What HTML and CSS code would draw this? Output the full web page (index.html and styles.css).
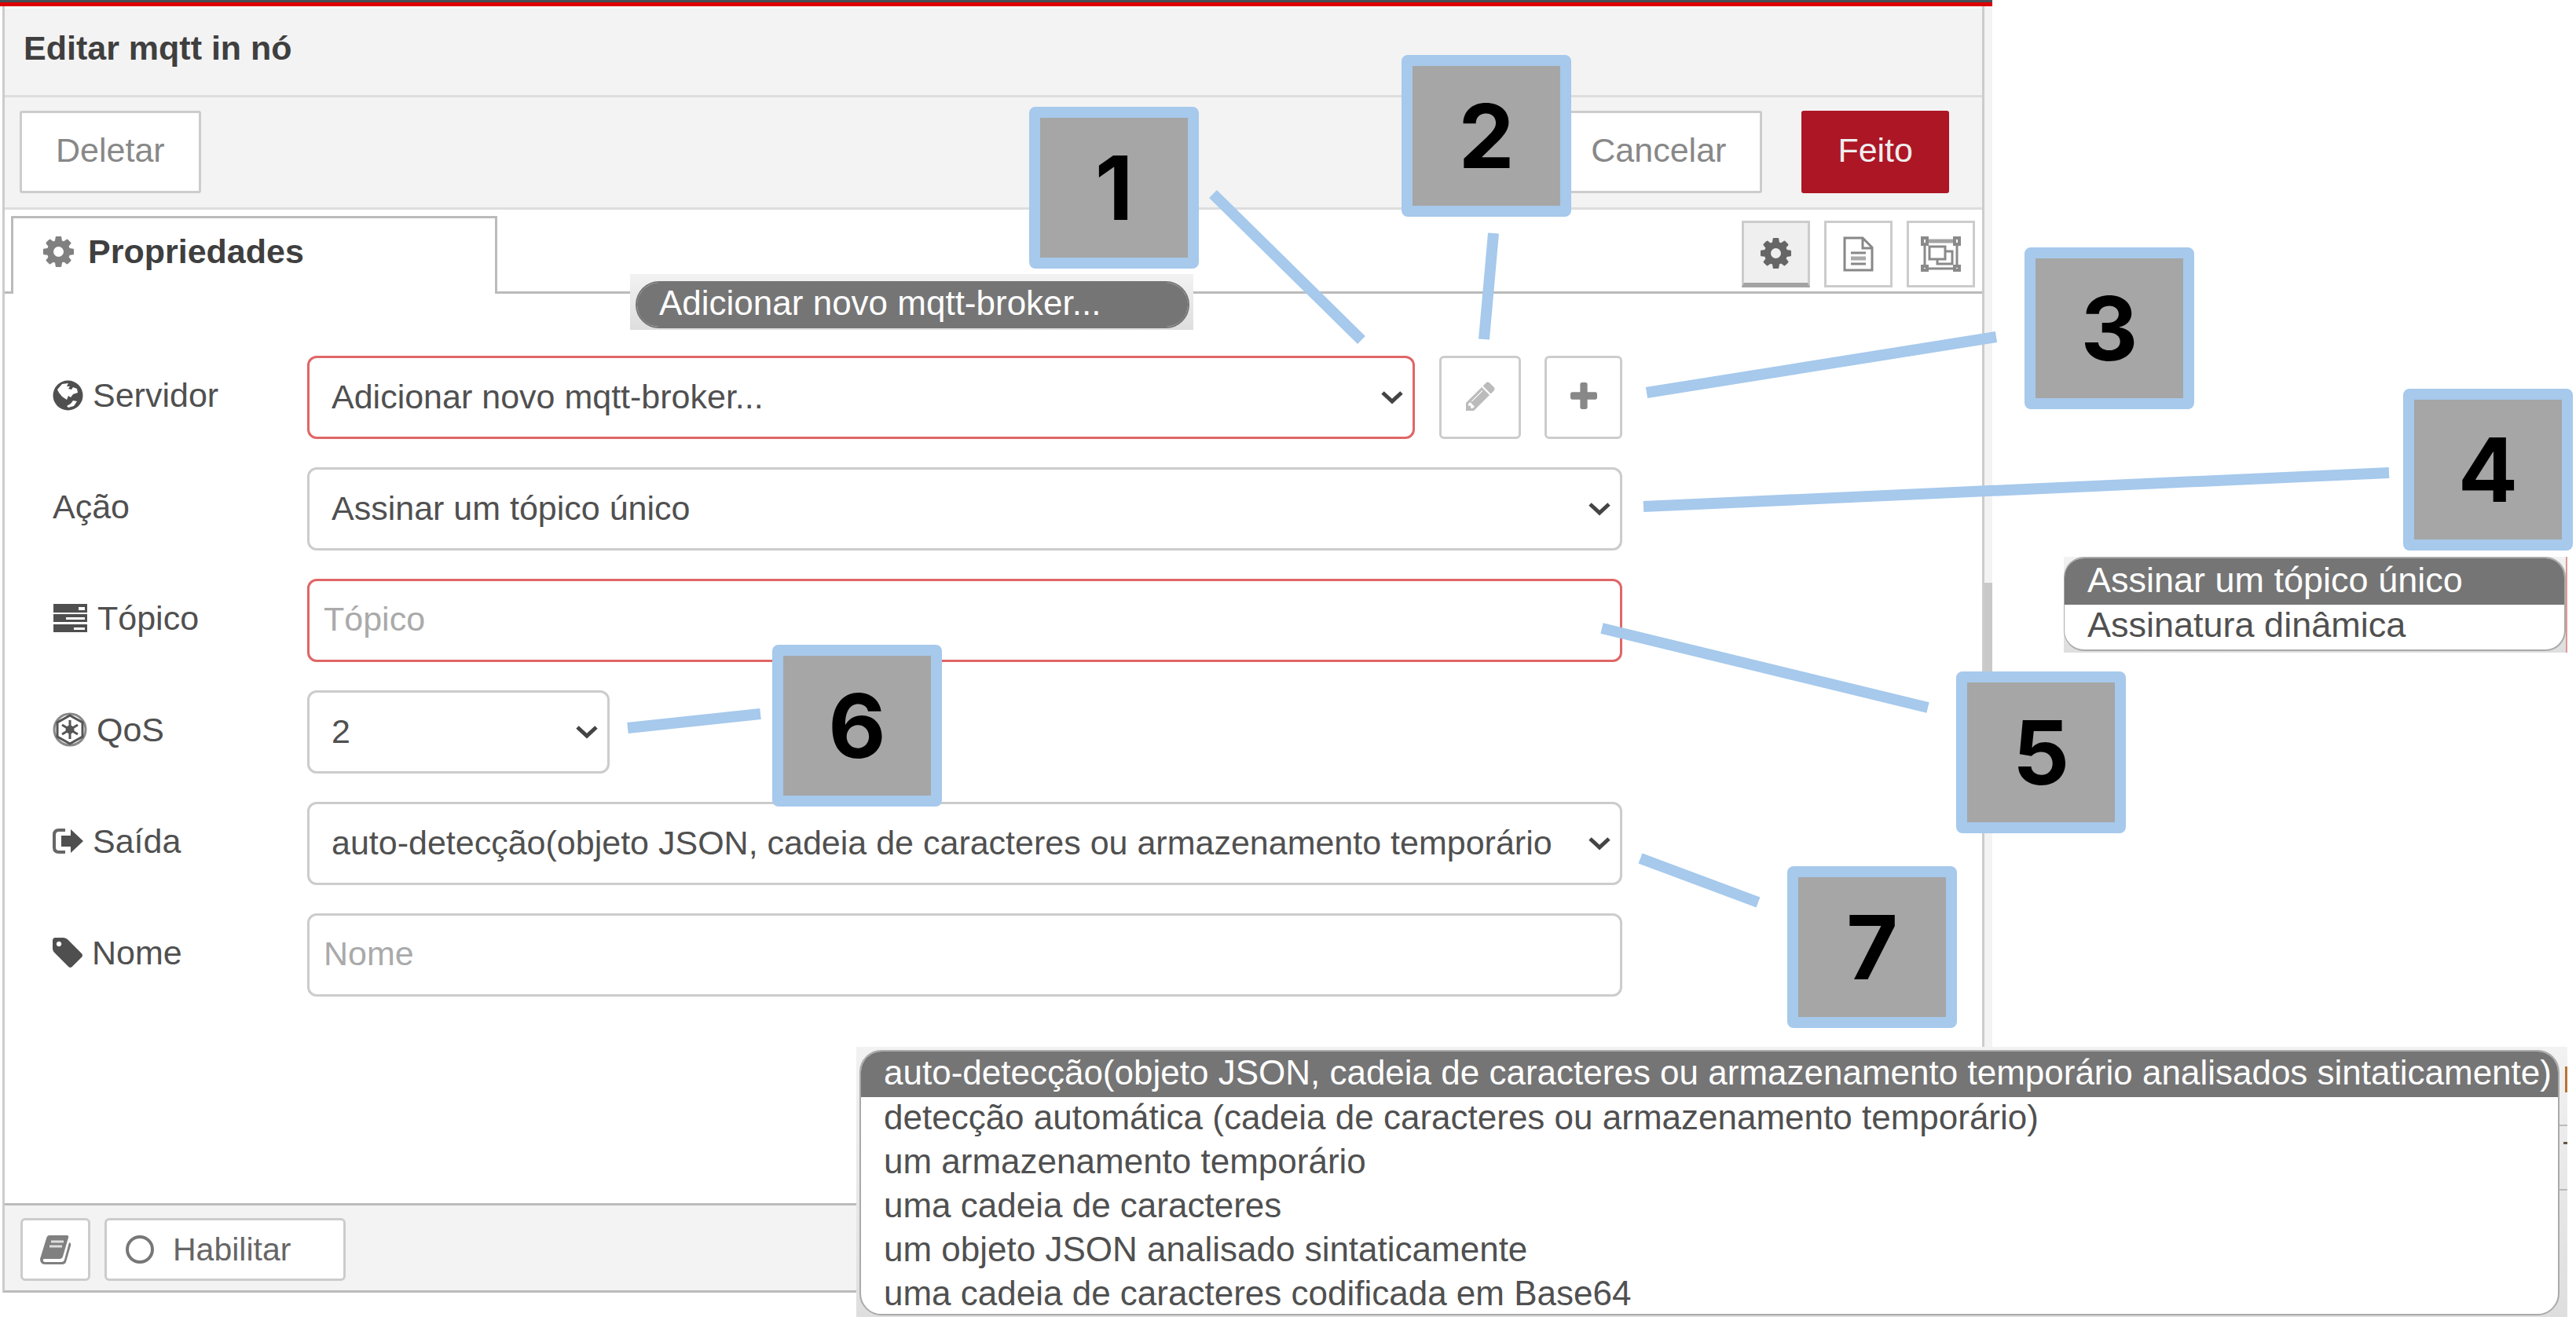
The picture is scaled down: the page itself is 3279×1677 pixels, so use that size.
FILE: index.html
```html
<!DOCTYPE html>
<html lang="pt-BR">
<head>
<meta charset="utf-8">
<title>Editar mqtt in nó</title>
<link rel="stylesheet" href="styles.css">
</head>
<body>
<main class="stage">
  <section class="editor">
    <div class="app-bar"></div>
    <div class="editor-row">
      <div class="panel">
        <header class="panel-title"><h1>Editar mqtt in nó</h1></header>
        <div class="toolbar">
          <button class="btn" type="button">Deletar</button>
          <div class="toolbar-right">
            <button class="btn" type="button">Cancelar</button>
            <button class="btn btn-primary" type="button">Feito</button>
          </div>
        </div>
        <nav class="tabs">
          <button class="tab" type="button">
            <svg class="cog" viewBox="128 128 1536 1536"><path d="M1152 896q0-106-75-181t-181-75-181 75-75 181 75 181 181 75 181-75 75-181zm512-109v222q0 12-8 23t-20 13l-185 28q-19 54-39 91 35 50 107 138 10 12 10 25t-9 23q-27 37-99 108t-94 71q-12 0-26-9l-138-108q-44 23-91 38-16 136-29 186-7 28-36 28h-222q-14 0-24.5-8.5t-11.5-21.5l-28-184q-49-16-90-37l-141 107q-10 9-25 9-14 0-25-11-126-114-165-168-7-10-7-23 0-12 8-23 15-21 51-66.5t54-70.5q-27-50-41-99l-183-27q-13-2-21-12.5t-8-23.5v-222q0-12 8-23t19-13l186-28q14-46 39-92-40-57-107-138-10-12-10-24 0-10 9-23 26-36 98.5-107.5t94.5-71.5q13 0 26 10l138 107q44-23 91-38 16-136 29-186 7-28 36-28h222q14 0 24.5 8.5t11.5 21.5l28 184q49 16 90 37l142-107q9-9 24-9 13 0 25 10 129 119 165 170 7 8 7 22 0 12-8 23-15 21-51 66.5t-54 70.5q26 50 41 98l183 28q13 2 21 12.5t8 23.5z"/></svg>
            Propriedades
          </button>
          <div class="tab-tools">
            <button class="tool tool-active" type="button" aria-label="Propriedades">
              <svg class="cog" viewBox="128 128 1536 1536"><path d="M1152 896q0-106-75-181t-181-75-181 75-75 181 75 181 181 75 181-75 75-181zm512-109v222q0 12-8 23t-20 13l-185 28q-19 54-39 91 35 50 107 138 10 12 10 25t-9 23q-27 37-99 108t-94 71q-12 0-26-9l-138-108q-44 23-91 38-16 136-29 186-7 28-36 28h-222q-14 0-24.5-8.5t-11.5-21.5l-28-184q-49-16-90-37l-141 107q-10 9-25 9-14 0-25-11-126-114-165-168-7-10-7-23 0-12 8-23 15-21 51-66.5t54-70.5q-27-50-41-99l-183-27q-13-2-21-12.5t-8-23.5v-222q0-12 8-23t19-13l186-28q14-46 39-92-40-57-107-138-10-12-10-24 0-10 9-23 26-36 98.5-107.5t94.5-71.5q13 0 26 10l138 107q44-23 91-38 16-136 29-186 7-28 36-28h222q14 0 24.5 8.5t11.5 21.5l28 184q49 16 90 37l142-107q9-9 24-9 13 0 25 10 129 119 165 170 7 8 7 22 0 12-8 23-15 21-51 66.5t-54 70.5q26 50 41 98l183 28q13 2 21 12.5t8 23.5z"/></svg>
            </button>
            <button class="tool" type="button" aria-label="Descrição">
              <svg width="39" height="45" viewBox="0 0 39 45" fill="none" stroke="#888" stroke-width="3"><path d="M2 2h23l12 12v29H2zM25 2v13h12"/><path d="M10 21h19M10 35h19"/><path d="M10 28h19" stroke-width="5" stroke="#aaa"/></svg>
            </button>
            <button class="tool" type="button" aria-label="Aparência">
              <svg width="53" height="45" viewBox="0 0 53 45" fill="none" stroke="#8a8a8a" stroke-width="3"><path stroke-width="5" stroke="#a3a3a3" d="M10 6h33"/><path d="M10 41h33M6 9v27M47 9v27"/><path d="M12 13h20v16H12zM32 19h9v16H22v-6"/><path stroke-width="4" fill="#fff" d="M3 2h6v8H3zM44 2h6v8h-6zM3 38h6v5H3zM44 38h6v5h-6z"/></svg>
            </button>
          </div>
        </nav>

        <form class="form">
          <label class="label" for="server">
            <svg width="39" height="39" viewBox="0 0 39 39"><circle cx="19.500" cy="19.500" r="19" fill="#4f4f4f"/><path fill="#fff" d="M6 12l6-7 8-1-2 4h4l-2 3 4 1 2-3 5 2 1 5-6 2-3 4-3-2-2 5-6-4-4-5zM23 30l3-4 5 1-4 6-7 2-2-2z"/></svg>
            Servidor
          </label>
          <div class="field">
            <select class="input select invalid" id="server"><option>Adicionar novo mqtt-broker...</option></select>
            <button class="icon-btn edit-btn" type="button" aria-label="Editar">
              <svg width="37" height="37" viewBox="128 128 1536 1536"><path fill="#bbb" d="M491 1536l91-91-235-235-91 91v107h128v128h107zm523-928q0-22-22-22-10 0-17 7l-542 542q-7 7-7 17 0 22 22 22 10 0 17-7l542-542q7-7 7-17zm-54-192l416 416-832 832h-416v-416zm683 96q0 53-37 90l-166 166-416-416 166-165q36-38 90-38 53 0 91 38l235 234q37 39 37 91z"/></svg>
            </button>
            <button class="icon-btn add-btn" type="button" aria-label="Adicionar">
              <svg width="34" height="34" viewBox="192 128 1408 1408"><path fill="#888" d="M1600 736v192q0 40-28 68t-68 28h-416v416q0 40-28 68t-68 28h-192q-40 0-68-28t-28-68v-416h-416q-40 0-68-28t-28-68v-192q0-40 28-68t68-28h416v-416q0-40 28-68t68-28h192q40 0 68 28t28 68v416h416q40 0 68 28t28 68z"/></svg>
            </button>
          </div>

          <label class="label" for="action">Ação</label>
          <div class="field">
            <select class="input select" id="action"><option>Assinar um tópico único</option><option>Assinatura dinâmica</option></select>
          </div>

          <label class="label" for="topic">
            <svg width="45" height="36" viewBox="0 0 45 36"><path fill="#4f4f4f" d="M1 0h43v11H1zM1 13h43v10H1zM1 26h43v10H1z"/><path fill="#fff" d="M33 4h8v4h-8zM17 17h24v3H17zM27 30h14v3H27z"/></svg>
            Tópico
          </label>
          <div class="field"><input class="input invalid" id="topic" type="text" placeholder="Tópico"></div>

          <label class="label" for="qos">
            <svg width="44" height="44" viewBox="0 0 44 44" fill="none" stroke="#555"><circle cx="22" cy="22" r="20" stroke="#888" stroke-width="3"/><path stroke-width="3" d="M22 4l16 9v18l-16 9-16-9V13z"/><path stroke-width="3" d="M22 10v24M12 16l20 12M32 16L12 28"/><circle cx="22" cy="22" r="5" fill="#555"/></svg>
            QoS
          </label>
          <div class="field">
            <select class="input select select-short" id="qos"><option>2</option></select>
          </div>

          <label class="label" for="output">
            <svg width="39" height="34" viewBox="0 0 39 34"><path fill="none" stroke="#666" stroke-width="4" d="M16 3H8q-6 0-6 6v16q0 6 6 6h8"/><path fill="#4f4f4f" d="M11 10h12V2l16 15-16 15v-8H11z"/></svg>
            Saída
          </label>
          <div class="field">
            <select class="input select" id="output"><option>auto-detecção(objeto JSON, cadeia de caracteres ou armazenamento temporário analisados sintaticamente)</option></select>
          </div>

          <label class="label" for="name">
            <svg width="38" height="38" viewBox="128 128 1515 1515"><path fill="#4f4f4f" d="M576 448q0-53-37.500-90.500t-90.500-37.500-90.500 37.500-37.500 90.500 37.500 90.500 90.500 37.500 90.500-37.500 37.500-90.500zm1067 576q0 53-37 90l-491 492q-39 37-91 37-53 0-90-37l-715-716q-38-37-64.500-101t-26.500-117v-416q0-52 38-90t90-38h416q53 0 117 26.500t102 64.500l715 714q37 39 37 91z"/></svg>
            Nome
          </label>
          <div class="field"><input class="input" id="name" type="text" placeholder="Nome"></div>
        </form>

        <footer class="panel-footer">
          <button class="foot-btn book-btn" type="button" aria-label="Ajuda">
            <svg width="40" height="37" viewBox="0 0 40 37"><path fill="#808080" d="M12 0h22q3 0 2 3l-7 24q-1 3-4 3H6q-3 0-2 2 0 2 3 2h20q3 0 4-3l6-22q3 1 2 4l-6 21q-1 3-5 3H6q-6 0-6-7L8 4q1-4 4-4z"/><path stroke="#ddd" stroke-width="3" d="M14 8h16M12 14h16"/></svg>
          </button>
          <button class="foot-btn enable-btn" type="button">
            <svg width="36" height="36" viewBox="0 0 36 36"><circle cx="18" cy="18" r="16" fill="none" stroke="#777" stroke-width="4"/></svg>
            Habilitar
          </button>
        </footer>
      </div>
      <div class="scroll-gutter"><div class="scroll-thumb"></div></div>
    </div>
  </section>

  <div class="popup popup-server">
    <ul class="menu"><li class="selected">Adicionar novo mqtt-broker...</li></ul>
  </div>
  <div class="popup popup-action">
    <ul class="menu"><li class="selected">Assinar um tópico único</li><li>Assinatura dinâmica</li></ul>
  </div>
  <div class="popup popup-output">
    <ul class="menu">
      <li class="selected">auto-detecção(objeto JSON, cadeia de caracteres ou armazenamento temporário analisados sintaticamente)</li>
      <li>detecção automática (cadeia de caracteres ou armazenamento temporário)</li>
      <li>um armazenamento temporário</li>
      <li>uma cadeia de caracteres</li>
      <li>um objeto JSON analisado sintaticamente</li>
      <li>uma cadeia de caracteres codificada em Base64</li>
    </ul>
    <svg class="popup-edge" width="10" height="344" viewBox="0 0 10 344"><path stroke="#bbb" stroke-width="2" d="M0 100h10M0 182h10"/><path fill="#b87333" d="M7 25h3v33H7z"/><path fill="#654" d="M5 121h5v3H5z"/></svg>
  </div>

  <svg class="leaders" width="3279" height="1677" viewBox="0 0 3279 1677" stroke="#a6c9ec" stroke-width="14">
    <path d="M1544 247L1733 433M1901 297L1889 432M2096 500L2541 429M2092 645L3041 602M2039 800L2454 901M799 927L968 909M2088 1093L2238 1149"/>
  </svg>
  <div class="marker m1">1</div>
  <div class="marker m2">2</div>
  <div class="marker m3">3</div>
  <div class="marker m4">4</div>
  <div class="marker m5">5</div>
  <div class="marker m6">6</div>
  <div class="marker m7">7</div>
</main>
</body>
</html>
```
FILE: styles.css
```css
* { box-sizing: border-box; }

body {
  margin: 0;
  background: #fff;
  color: #505050;
  font-family: "Liberation Sans", Arial, sans-serif;
  font-size: 43px;
  line-height: 50px;
}

svg { display: block; flex: none; }

button, select, input { font: inherit; color: inherit; margin: 0; }

.stage {
  position: relative;
  min-height: 100vh;
  overflow: hidden;
}

/* Editor panel; the free area to its right holds the notes */
.editor { margin-right: 743px; }

.app-bar {
  height: 8px;
  background: #dd0000;
  border-top: 3px solid #465055;
}

.editor-row { display: flex; padding-left: 3px; }

.panel {
  flex: 1;
  min-width: 0;
  border: 3px solid #ccc;
  border-top: 0;
  border-bottom-color: #bbb;
}

.panel-title {
  height: 116px;
  padding: 25px 24px 0;
  background: #f3f3f3;
  border-top: 3px solid #f5fdfd;
  border-bottom: 3px solid #ddd;
}

.panel-title h1 { margin: 0; font-size: 43px; line-height: 50px; color: #3f3f3f; }

.toolbar {
  display: flex;
  align-items: center;
  justify-content: space-between;
  height: 143px;
  padding: 0 42px 2px 19px;
  background: #f3f3f3;
  border-bottom: 3px solid #ddd;
}

.toolbar-right { display: flex; gap: 50px; }

.btn {
  height: 105px;
  padding: 0 43px 4px;
  background: #fff;
  border: 3px solid #ccc;
  border-radius: 3px;
  color: #888;
}

.btn-primary { background: #ad1625; border-color: #ad1625; color: #eee; }

.tabs {
  display: flex;
  justify-content: space-between;
  height: 107px;
  padding: 8px 9px 0 8px;
  border-bottom: 3px solid #bbb;
}

.tab {
  display: flex;
  align-items: center;
  gap: 18px;
  width: 619px;
  height: 99px;
  padding: 0 0 12px 38px;
  background: #fff;
  border: 3px solid #bbb;
  border-bottom: 0;
  color: #3f3f3f;
  font-weight: bold;
}

.cog { width: 39px; height: 39px; fill: #808080; }

.tab-tools { display: flex; gap: 18px; padding-top: 6px; }

.tool {
  display: flex;
  align-items: center;
  justify-content: center;
  width: 87px;
  height: 85px;
  padding: 0;
  background: #fff;
  border: 3px solid #ccc;
}

.tool-active { background: #efefef; border-bottom: 6px solid #a3a3a3; }
.tool-active .cog { fill: #666; }

.form {
  display: grid;
  grid-template-columns: 324px 1fr;
  row-gap: 36px;
  padding: 79px 458px 263px 61px;
}

.label {
  display: flex;
  align-items: center;
  gap: 12px;
  padding-bottom: 6px;
}

.field { display: flex; min-width: 0; height: 106px; }

.input {
  flex: 1;
  min-width: 0;
  height: 106px;
  padding: 0 18px 4px;
  background-color: #fff;
  border: 3px solid #ccc;
  border-radius: 12px;
}

.input::placeholder { color: #aaa; opacity: 1; }

.select {
  appearance: none;
  padding: 0 82px 2px 28px;
  background-image: url("data:image/svg+xml,%3Csvg xmlns='http://www.w3.org/2000/svg' width='28' height='18' fill='none' stroke='%23444' stroke-width='5'%3E%3Cpath d='M2 3l12 11L26 3'/%3E%3C/svg%3E");
  background-repeat: no-repeat;
  background-position: right 12px center;
}

.select-short { flex: none; width: 385px; }

.invalid { border-color: #e06666; }

.icon-btn {
  display: flex;
  align-items: center;
  justify-content: center;
  height: 106px;
  padding: 0 0 4px;
  background: #fff;
  border: 3px solid #ccc;
  border-radius: 6px;
}

.edit-btn { width: 104px; margin-left: 31px; }
.add-btn { width: 99px; margin-left: 30px; }

.panel-footer {
  display: flex;
  gap: 18px;
  padding: 16px 20px 12px;
  background: #f3f3f3;
  border-top: 3px solid #bbb;
}

.foot-btn {
  display: flex;
  align-items: center;
  height: 80px;
  background: #fff;
  border: 3px solid #ccc;
  border-radius: 6px;
  font-size: 41px;
  color: #666;
}

.book-btn { width: 89px; padding: 0 22px; }
.enable-btn { width: 307px; gap: 24px; padding: 0 24px; }

.scroll-gutter { width: 10px; padding-top: 734px; background: #f3f3f3; }
.scroll-thumb { height: 260px; background: #c9c9c9; }

/* Open option lists */
.popup { position: absolute; background: linear-gradient(#f2f2f2, #dedede); }

.menu {
  margin: 0;
  padding: 0;
  list-style: none;
  overflow: hidden;
  background: #fff;
  border: 2px solid #aaa;
  white-space: nowrap;
  font-size: 44px;
}

.menu li { height: 56px; padding-left: 29px; line-height: 51px; }
.menu .selected { background: #757575; color: #fff; }

.popup-server { left: 802px; top: 349px; width: 717px; height: 71px; padding: 9px 5px 0 7px; }
.popup-server .menu { border-color: #757575; border-radius: 30px; }
.popup-server li { padding-left: 28px; }

.popup-action { left: 2627px; top: 709px; width: 641px; height: 122px; border-right: 2px solid #d99; }
.popup-action .menu { height: 120px; border-radius: 26px; font-size: 45px; border-left-width: 1px; }
.popup-action .selected { height: 59px; line-height: 56px; }

.popup-output { left: 1090px; right: 11px; top: 1333px; height: 344px; padding: 4px 10px 0 4px; }
.popup-output .menu { height: 338px; border-radius: 28px; }
.popup-output .selected { height: 58px; line-height: 54px; }
.popup-edge { position: absolute; right: 0; top: 0; }

/* Numbered notes */
.leaders { position: absolute; left: 0; top: 0; pointer-events: none; }

.marker {
  position: absolute;
  width: 216px;
  height: 206px;
  background: #a6a6a6;
  border: 14px solid #a6c9ec;
  border-radius: 8px;
  color: #000;
  font-family: Inter, "Liberation Sans", sans-serif;
  font-size: 113px;
  font-weight: bold;
  line-height: 178px;
  text-align: center;
}

.m1 { left: 1310px; top: 136px; }
.m2 { left: 1784px; top: 70px; }
.m3 { left: 2577px; top: 315px; }
.m4 { left: 3059px; top: 495px; }
.m5 { left: 2490px; top: 855px; }
.m6 { left: 983px; top: 821px; }
.m7 { left: 2275px; top: 1103px; }
```
